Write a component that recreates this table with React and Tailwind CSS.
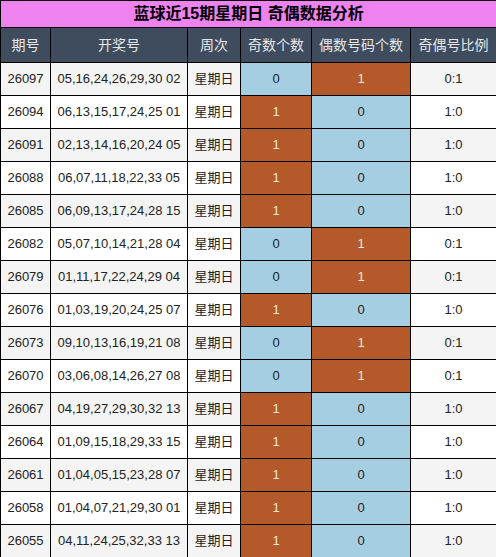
import React from 'react';

const rows = [
  ['26097', '05,16,24,26,29,30 02', 0, 1],
  ['26094', '06,13,15,17,24,25 01', 1, 0],
  ['26091', '02,13,14,16,20,24 05', 1, 0],
  ['26088', '06,07,11,18,22,33 05', 1, 0],
  ['26085', '06,09,13,17,24,28 15', 1, 0],
  ['26082', '05,07,10,14,21,28 04', 0, 1],
  ['26079', '01,11,17,22,24,29 04', 0, 1],
  ['26076', '01,03,19,20,24,25 07', 1, 0],
  ['26073', '09,10,13,16,19,21 08', 0, 1],
  ['26070', '03,06,08,14,26,27 08', 0, 1],
  ['26067', '04,19,27,29,30,32 13', 1, 0],
  ['26064', '01,09,15,18,29,33 15', 1, 0],
  ['26061', '01,04,05,15,23,28 07', 1, 0],
  ['26058', '01,04,07,21,29,30 01', 1, 0],
  ['26055', '04,11,24,25,32,33 13', 1, 0],
];

const headers = ['期号', '开奖号', '周次', '奇数个数', '偶数号码个数', '奇偶号比例'];

function countCell(v) {
  return v === 1
    ? 'bg-[#b3592a] text-[#f3e6dc]'
    : 'bg-[#a6cee3] text-[#222]';
}

export default function App() {
  return (
    <div className="w-[496px] h-[557px] bg-white overflow-hidden" style={{ fontFamily: '"Liberation Sans", "Noto Sans CJK SC", sans-serif' }}>
      <table className="w-[496px] border-collapse table-fixed text-[13px] text-[#222]">
        <colgroup>
          <col className="w-[50px]" />
          <col className="w-[137px]" />
          <col className="w-[53px]" />
          <col className="w-[71px]" />
          <col className="w-[99px]" />
          <col className="w-[86px]" />
        </colgroup>
        <thead>
          <tr className="h-[27px]">
            <th colSpan={6} className="border border-black bg-[#ee82ee] text-[16px] font-bold text-black leading-none">
              蓝球近15期星期日 奇偶数据分析
            </th>
          </tr>
          <tr className="h-[35px]">
            {headers.map(h => (
              <th key={h} className="border border-black bg-[#3e4c5e] text-[#e6e6e6] text-[14px] font-normal">
                {h}
              </th>
            ))}
          </tr>
        </thead>
        <tbody>
          {rows.map(([id, nums, odd, even], i) => {
            const bg = i % 2 === 0 ? 'bg-[#f4f4f4]' : 'bg-white';
            return (
              <tr key={id} className="h-[33px]">
                <td className={`border border-black text-center ${bg}`}>{id}</td>
                <td className={`border border-black text-center ${bg}`}>{nums}</td>
                <td className={`border border-black text-center ${bg}`}>星期日</td>
                <td className={`border border-black text-center ${countCell(odd)}`}>{odd}</td>
                <td className={`border border-black text-center ${countCell(even)}`}>{even}</td>
                <td className={`border border-black text-center ${bg}`}>{odd}:{even}</td>
              </tr>
            );
          })}
        </tbody>
      </table>
    </div>
  );
}
